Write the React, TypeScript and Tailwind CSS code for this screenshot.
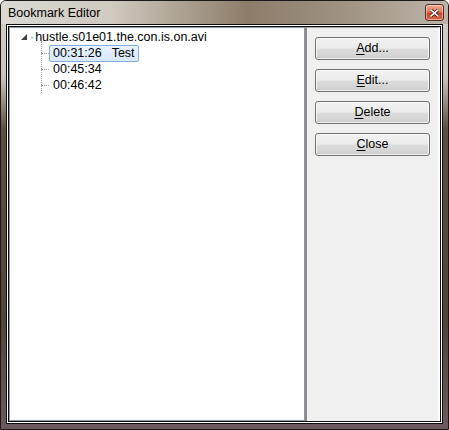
import React from 'react';

const bookmarks = [
  { time: '00:31:26', note: 'Test', selected: true },
  { time: '00:45:34', note: '', selected: false },
  { time: '00:46:42', note: '', selected: false },
];

const actions = [
  { key: 'A', rest: 'dd...' },
  { key: 'E', rest: 'dit...' },
  { key: 'D', rest: 'elete' },
  { key: 'C', rest: 'lose' },
];

const font = { fontFamily: '"Liberation Sans", "Noto Sans", sans-serif' };

function CloseButton() {
  return (
    <div className="w-[19px] h-[17px] rounded-[3px] border border-[#5a2a22] bg-[linear-gradient(180deg,#f0a892_0%,#e07a60_45%,#c7432a_55%,#d9664a_100%)] flex items-center justify-center shadow-[inset_0_0_0_1px_rgba(255,255,255,0.45)]">
      <svg width="9" height="8" viewBox="0 0 9 8">
        <path d="M1 1 L8 7 M8 1 L1 7" stroke="#3a1a14" strokeWidth="3" strokeLinecap="square" />
        <path d="M1 1 L8 7 M8 1 L1 7" stroke="#ffffff" strokeWidth="1.6" strokeLinecap="square" />
      </svg>
    </div>
  );
}

function Btn({ k, rest }: { k: string; rest: string }) {
  return (
    <button className="w-[115px] h-[23px] rounded-[3px] border border-[#707070] bg-[linear-gradient(180deg,#f2f2f2_0%,#ebebeb_48%,#dddddd_52%,#cfcfcf_100%)] shadow-[inset_0_0_0_1px_rgba(255,255,255,0.7)] text-[12.5px] text-black leading-none">
      <span className="underline underline-offset-2">{k}</span>
      {rest}
    </button>
  );
}

export default function App() {
  return (
    <div className="w-[449px] h-[430px] bg-white" style={font}>
      <div className="w-full h-full flex flex-col border border-[#1c1a18] rounded-t-[6px] bg-[linear-gradient(180deg,#d3d0ca_0%,#c9c4bb_18%,#5c4f3f_30%,#51463a_75%,#6e5a5f_100%)]">
        {/* title bar */}
        <div className="h-[23px] flex items-center justify-between pl-[7px] pr-[4px] bg-[linear-gradient(90deg,#dcd9d3_0%,#cfc9bf_25%,#8c7d69_55%,#9d9080_75%,#bdb4a9_100%)] rounded-t-[5px]">
          <span className="text-[12.5px] text-black pt-[1px]">Bookmark Editor</span>
          <CloseButton />
        </div>

        {/* client area */}
        <div className="flex-1 mx-[5px] mb-[5px] border border-[#101010] p-px bg-white">
          <div className="w-full h-full border border-[#101010] flex bg-[#f0f0f0]">
            {/* tree */}
            <div className="w-[296px] border border-[#8d96a4] bg-white relative text-[12.5px] text-black">
              <div className="flex items-center h-[16px] mt-[1px] pl-[10px]">
                <svg width="8" height="8" viewBox="0 0 8 8" className="mr-[2px]">
                  <path d="M7 1 L7 7 L1 7 Z" fill="#404040" />
                </svg>
                <span className="text-[#808080] tracking-[-1px] leading-none mr-[2px]">·</span>
                <span>hustle.s01e01.the.con.is.on.avi</span>
              </div>
              <div className="relative pl-[31px]">
                {/* tree guide lines */}
                <div className="absolute left-[31px] top-[-4px] h-[52px] border-l border-dotted border-[#a0a0a0]" />
                {bookmarks.map((b) => (
                  <div key={b.time} className="flex items-center h-[16px]">
                    <div className="w-[8px] border-t border-dotted border-[#a0a0a0]" />
                    <span
                      className={
                        b.selected
                          ? 'px-[3px] h-[17px] flex items-center rounded-[2px] border border-[#84acdd] bg-[linear-gradient(180deg,#eaf3fd,#d9e8fb)]'
                          : 'px-[4px] h-[16px] flex items-center'
                      }
                    >
                      {b.time}
                      {b.note && <span className="ml-[10px]">{b.note}</span>}
                    </span>
                  </div>
                ))}
              </div>
            </div>

            {/* button pane */}
            <div className="flex-1 border-l-2 border-l-[#8a8a8a] border-t border-t-[#a0a0a0] border-r-2 border-r-white flex flex-col items-center gap-[9px] pt-[9px]">
              {actions.map((a) => (
                <Btn key={a.key} k={a.key} rest={a.rest} />
              ))}
            </div>
          </div>
        </div>
      </div>
    </div>
  );
}
